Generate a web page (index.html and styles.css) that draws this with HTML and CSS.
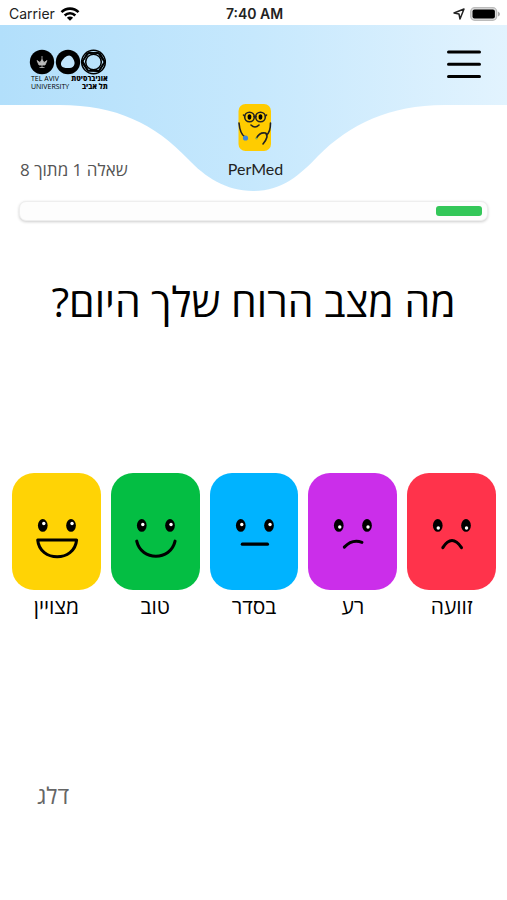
FILE: index.html
```html
<!DOCTYPE html>
<html lang="he" dir="rtl">
<head>
    <meta charset="UTF-8">
    <meta name="viewport" content="width=device-width, initial-scale=1.0">
    <title>PerMed</title>
    <link rel="stylesheet" href="styles.css">
</head>
<body>

<div class="status-bar" dir="ltr">
    <div class="status-left">
        <span>Carrier</span>
        <svg width="20" height="14" viewBox="0 0 20 14">
            <g fill="none" stroke="#000" stroke-width="2.6">
                <path d="M1.5 5.2a12 12 0 0 1 17 0"/>
                <path d="M4.7 8.5a7.5 7.5 0 0 1 10.6 0"/>
            </g>
            <path d="M10 13.8 6.9 10.7a4.4 4.4 0 0 1 6.2 0z"/>
        </svg>
    </div>
    <div class="status-time">7:40 AM</div>
    <div class="status-right">
        <svg width="12" height="12" viewBox="0 0 12 12">
            <path d="M11 1 7 11 6 6 1 5z" fill="none" stroke="#222" stroke-width="1.5" stroke-linejoin="round"/>
        </svg>
        <svg width="30" height="14" viewBox="0 0 30 14">
            <rect x="0.7" y="0.7" width="26" height="12.6" rx="4" fill="#ddd" stroke="#bbb" stroke-width="1.3"/>
            <rect x="2.5" y="2.5" width="22.4" height="9" rx="2"/>
            <path d="M28 4.5q2 1 2 2.5t-2 2.5z" fill="#aaa"/>
        </svg>
    </div>
</div>

<header class="header" dir="ltr">
    <svg class="wave" viewBox="0 0 507 166" preserveAspectRatio="none">
        <defs>
            <linearGradient id="sky">
                <stop offset="0" stop-color="#b2dffb"/>
                <stop offset="0.5" stop-color="#c6e8fd"/>
                <stop offset="1" stop-color="#e2f3fe"/>
            </linearGradient>
        </defs>
        <path d="M0 0H507V80H444C390 80 350 99 318 131C300 150 282 166 253 166C226 166 205 152 188 134C155 99 116 80 60 80H0z" fill="url(#sky)"/>
    </svg>

    <div class="university">
        <svg width="78" height="26" viewBox="0 0 78 26">
            <circle cx="13" cy="13" r="12.2"/>
            <path d="M13 7v12M10.500 18.500h5M8 11.500l2 4.500h6l2-4.500-3 2-2-3-2 3z" fill="#bbb" stroke="#bbb" stroke-width="0.800"/>
            <circle cx="39" cy="13" r="12.2"/>
            <path d="M38 7q3-1.500 5 1 3 4 2.500 7-1 4-5 4-6 .5-8-2-1.500-3 1-6 2-3 4.500-4z" fill="#c0e4fb"/>
            <g fill="none" stroke="#000" stroke-width="1.5">
                <circle cx="64.5" cy="13" r="11.8"/>
                <path d="M60 3.500 71 4.500 76 13 70 22.500 59 21.500 53.500 12z"/>
                <path d="M69 3.500 58 4.500 53 13.500 59 22 70 21.500 75.500 13z"/>
                <circle cx="64.5" cy="13" r="7.8"/>
            </g>
        </svg>
        <div class="university-names">
            <span>TEL AVIV</span>
            <strong lang="he">אוניברסיטת</strong>
            <span>UNIVERSITY</span>
            <strong lang="he">תל אביב</strong>
        </div>
    </div>

    <div class="brand">
        <svg width="36" height="50" viewBox="0 0 36 50">
            <rect x="1.5" y="1" width="32.5" height="47" rx="7" fill="#fc0"/>
            <g fill="none" stroke="#222" stroke-width="1.6" stroke-linecap="round">
                <circle cx="12.5" cy="14" r="4.8"/>
                <circle cx="23.5" cy="14" r="4.8"/>
                <path d="M17 13.5h2M7.500 13l-1-1M28.500 13l1-1"/>
                <path d="M14 22q4 4 8 0"/>
                <path d="M2 20Q3 31 8 34"/>
                <path d="M33.500 20q0 9-4 12M19.500 35q3-6 9-5 4 3-2.500 11"/>
            </g>
            <ellipse cx="12.5" cy="14" rx="1.9" ry="2.8"/>
            <ellipse cx="23.5" cy="14" rx="1.9" ry="2.8"/>
            <circle cx="8.5" cy="35" r="2.6" fill="#3f87d9"/>
            <circle cx="19.5" cy="35.500" r="1" fill="#7bb661"/>
        </svg>
        <span>PerMed</span>
    </div>

    <button class="menu-button" aria-label="תפריט">
        <svg width="36" height="30" viewBox="0 0 36 30">
            <path d="M2.5 3h31M2.5 15.2h31M2.5 27.5h31" stroke="#000" stroke-width="3" stroke-linecap="round"/>
        </svg>
    </button>
</header>

<main>
    <p class="counter">שאלה 1 מתוך 8</p>
    <div class="progress" role="progressbar" aria-valuemin="0" aria-valuemax="100" aria-valuenow="10">
        <div class="progress-fill" style="width: 10%"></div>
    </div>

    <h1>מה מצב הרוח שלך היום?</h1>

    <div class="moods">
        <button class="mood">
            <span class="face awful">
                <svg viewBox="0 0 88 116">
                    <ellipse cx="30.5" cy="52" rx="4.8" ry="6.3"/>
                    <ellipse cx="58.5" cy="52" rx="4.8" ry="6.3"/>
                    <circle cx="31" cy="54.5" r="1.7" fill="#fff"/>
                    <circle cx="59" cy="54.5" r="1.7" fill="#fff"/>
                    <path class="mouth" d="M35.5 74q9-14 18.5 0"/>
                </svg>
            </span>
            זוועה
        </button>
        <button class="mood">
            <span class="face bad">
                <svg viewBox="0 0 88 116">
                    <ellipse cx="30.5" cy="52" rx="4.8" ry="6.3"/>
                    <ellipse cx="58.5" cy="52" rx="4.8" ry="6.3"/>
                    <circle cx="31.5" cy="53.5" r="1.7" fill="#fff"/>
                    <circle cx="59.5" cy="53.5" r="1.7" fill="#fff"/>
                    <path class="mouth" d="M36 73.5q8-8.5 17.5-4.8"/>
                </svg>
            </span>
            רע
        </button>
        <button class="mood">
            <span class="face okay">
                <svg viewBox="0 0 88 116">
                    <ellipse cx="30.5" cy="52" rx="4.8" ry="6.3"/>
                    <ellipse cx="58.5" cy="52" rx="4.8" ry="6.3"/>
                    <circle cx="31.5" cy="51" r="1.7" fill="#fff"/>
                    <circle cx="59.5" cy="51" r="1.7" fill="#fff"/>
                    <path class="mouth" d="M32 70.5h25"/>
                </svg>
            </span>
            בסדר
        </button>
        <button class="mood">
            <span class="face good">
                <svg viewBox="0 0 88 116">
                    <ellipse cx="30.5" cy="52" rx="4.8" ry="6.3"/>
                    <ellipse cx="58.5" cy="52" rx="4.8" ry="6.3"/>
                    <circle cx="31.5" cy="51" r="1.7" fill="#fff"/>
                    <circle cx="59.5" cy="51" r="1.7" fill="#fff"/>
                    <path class="mouth" d="M25.5 67.5C30 87.5 59 87.5 63.5 67.5"/>
                </svg>
            </span>
            טוב
        </button>
        <button class="mood">
            <span class="face great">
                <svg viewBox="0 0 88 116">
                    <ellipse cx="30.5" cy="52" rx="4.8" ry="6.3"/>
                    <ellipse cx="58.5" cy="52" rx="4.8" ry="6.3"/>
                    <circle cx="31.5" cy="50" r="1.7" fill="#fff"/>
                    <circle cx="59.5" cy="50" r="1.7" fill="#fff"/>
                    <path class="mouth" d="M25.5 66.5h38.500C62 88.500 27.500 88.500 25.500 66.500z"/>
                </svg>
            </span>
            מצויין
        </button>
    </div>

    <button class="skip">דלג</button>
</main>

</body>
</html>
```
FILE: styles.css
```css
* {
    box-sizing: border-box;
}

body {
    margin: 0;
    font-family: 'Open Sans', 'Noto Sans', 'DejaVu Sans', sans-serif;
    background-color: #fff;
    color: #000;
}

button {
    font-family: inherit;
    color: inherit;
    background: none;
    border: none;
    padding: 0;
    cursor: pointer;
}

svg {
    display: block;
}

.status-bar {
    display: grid;
    grid-template-columns: 1fr auto 1fr;
    align-items: center;
    height: 25px;
    padding: 2px 7px 0 9px;
    font-family: Inter, sans-serif;
    font-size: 14px;
    color: #222;
}

.status-left,
.status-right {
    display: flex;
    align-items: center;
    gap: 5px;
}

.status-right {
    justify-content: flex-end;
}

.status-time {
    font-weight: 600;
}

.header {
    position: relative;
    display: grid;
    grid-template-columns: 1fr auto 1fr;
    align-items: start;
    height: 134px;
    padding: 24px 25px 0 29px;
}

.wave {
    position: absolute;
    top: 0;
    left: 0;
    width: 100%;
    height: 166px;
    z-index: -1;
}

.university-names {
    display: grid;
    grid-template-columns: auto auto;
    justify-content: start;
    column-gap: 2px;
    padding-left: 2px;
    font-family: 'Open Sans', sans-serif;
    font-size: 7px;
    line-height: 8px;
}

.university-names strong {
    font-weight: 800;
    text-align: right;
}

.brand {
    display: flex;
    flex-direction: column;
    align-items: center;
    gap: 5px;
    padding-top: 54px;
    font-family: Lato, sans-serif;
    font-size: 16px;
    line-height: 22px;
    color: #222;
}

.menu-button {
    justify-self: end;
}

.counter {
    margin: 0 20px;
    font-size: 17px;
    line-height: 22px;
    text-align: left;
    color: #555;
}

.progress {
    height: 20px;
    margin: 20px 19px 0;
    padding: 4px 5px;
    border: 1px solid #eee;
    border-radius: 7px;
    background-color: #fdfdfd;
    box-shadow: 0 1px 3px rgba(0, 0, 0, 0.2);
}

.progress-fill {
    height: 100%;
    border-radius: 3px;
    background-color: #34c759;
}

h1 {
    margin: 50px 20px 0;
    font-size: 41px;
    font-weight: 400;
    line-height: 60px;
    text-align: center;
}

.moods {
    display: grid;
    grid-template-columns: repeat(5, 1fr);
    gap: 10px;
    margin: 142px 11px 0 12px;
}

.mood {
    font-size: 21px;
    line-height: 32px;
}

.face {
    display: block;
    border-radius: 22px;
}

.mouth {
    fill: none;
    stroke: #000;
    stroke-width: 3;
    stroke-linecap: round;
    stroke-linejoin: round;
}

.awful {
    background-color: #ff334b;
}

.bad {
    background-color: #cb2eea;
}

.okay {
    background-color: #00b3ff;
}

.good {
    background-color: #04be43;
}

.great {
    background-color: #ffd305;
}

.skip {
    display: block;
    margin: 157px auto 0 37px;
    font-size: 23px;
    line-height: 32px;
    color: #666;
}
```
